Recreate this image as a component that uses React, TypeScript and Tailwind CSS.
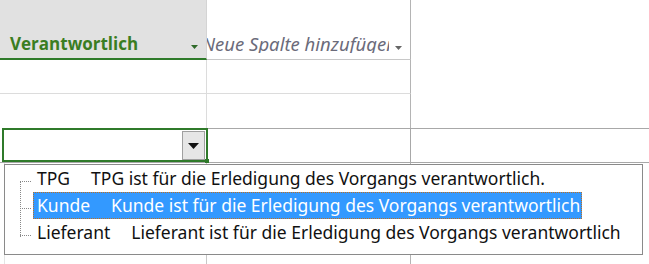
export default function App() {
  const items = [
    { code: "TPG", text: "TPG ist für die Erledigung des Vorgangs verantwortlich.", sel: false },
    { code: "Kunde", text: "Kunde ist für die Erledigung des Vorgangs verantwortlich", sel: true },
    { code: "Lieferant", text: "Lieferant ist für die Erledigung des Vorgangs verantwortlich", sel: false },
  ]

  return (
    <div className="relative w-[649px] h-[264px] overflow-hidden bg-white font-['Noto_Sans',sans-serif]">
      {/* header row */}
      <div className="flex h-[60px]">
        <div className="flex w-[207px] items-end border-b-2 border-r border-b-[#2f7a2a] border-r-[#d4d4d4] bg-[#e1e1e1] pb-[6px] pl-[10px] pr-[8px]">
          <span className="font-['Open_Sans',sans-serif] text-[17px] font-bold leading-none text-[#3a7d22]">Verantwortlich</span>
          <svg className="mb-[3px] ml-auto" width="7" height="4" viewBox="0 0 7 4">
            <path d="M0 0h7L3.5 4z" fill="#2f6a2a" />
          </svg>
        </div>
        <div className="flex w-[204px] items-end border-b border-r border-b-[#c8c8c8] border-r-[#b4b4b4] pb-[6px] pr-[8px]">
          <div className="w-[182px] overflow-hidden">
            <span className="ml-[-5px] block whitespace-nowrap text-[18.5px] italic leading-none text-[#6b6b7a]">
              Neue Spalte hinzufügen
            </span>
          </div>
          <svg className="mb-[3px] ml-auto" width="7" height="4" viewBox="0 0 7 4">
            <path d="M0 0h7L3.5 4z" fill="#666" />
          </svg>
        </div>
        <div className="flex-1" />
      </div>

      {/* empty rows */}
      <div className="flex h-[34px]">
        <div className="w-[207px] border-b border-r border-[#dcdcdc]" />
        <div className="w-[204px] border-b border-r border-b-[#dcdcdc] border-r-[#b4b4b4]" />
        <div className="flex-1" />
      </div>
      <div className="flex h-[34px]">
        <div className="w-[207px] border-r border-[#dcdcdc]" />
        <div className="w-[204px] border-r border-[#b4b4b4]" />
        <div className="flex-1" />
      </div>

      {/* active row */}
      <div className="flex h-[35px] border-b border-[#a8a8a8]">
        <div className="relative ml-[2px] flex w-[206px] items-stretch justify-end border-2 border-[#2f7a2a] pr-[1px] pt-[1px]">
          <div className="flex w-[23px] items-center justify-center border border-[#a0a0a0] bg-[#e6e6e6]">
            <svg width="11" height="6" viewBox="0 0 11 6">
              <path d="M0 0h11L5.5 6z" fill="#111" />
            </svg>
          </div>
          <div className="absolute bottom-[-3px] right-[-3px] h-[4px] w-[4px] bg-[#2f7a2a]" />
        </div>
        <div className="w-[203px] border-r border-t border-[#a8a8a8]" />
        <div className="flex-1 border-t border-[#a8a8a8]" />
      </div>

      {/* rows below */}
      <div className="flex h-[101px]">
        <div className="w-[5px] border-r border-[#e4e4e4]" />
        <div className="w-[202px] border-r border-[#c8c8c8]" />
        <div className="w-[204px] border-r border-[#b4b4b4]" />
        <div className="flex-1" />
      </div>

      {/* dropdown list */}
      <div className="absolute left-[4px] top-[164px] h-[91px] w-[639px] border border-[#8a8a8a] bg-white">
        <div className="relative pl-[28px]">
          <div className="absolute left-[15px] top-[16px] h-[56px] border-l border-dotted border-[#888]" />
          {items.map((it) => (
            <div key={it.code} className="relative flex h-[27px] items-center">
              <div className="absolute left-[-13px] top-[16px] w-[11px] border-t border-dotted border-[#888]" />
              <div
                className={
                  it.sel
                    ? "flex h-[27px] items-center gap-[21px] border border-dotted border-[#c07020] bg-[#3399ff] pl-[3px] pr-[1px] text-white"
                    : "flex h-[27px] items-center gap-[21px] pl-[4px] text-[#111]"
                }
              >
                <span className="whitespace-nowrap text-[17.5px] leading-none">{it.code}</span>
                <span className="whitespace-nowrap text-[17.5px] leading-none">{it.text}</span>
              </div>
            </div>
          ))}
        </div>
      </div>
    </div>
  )
}
